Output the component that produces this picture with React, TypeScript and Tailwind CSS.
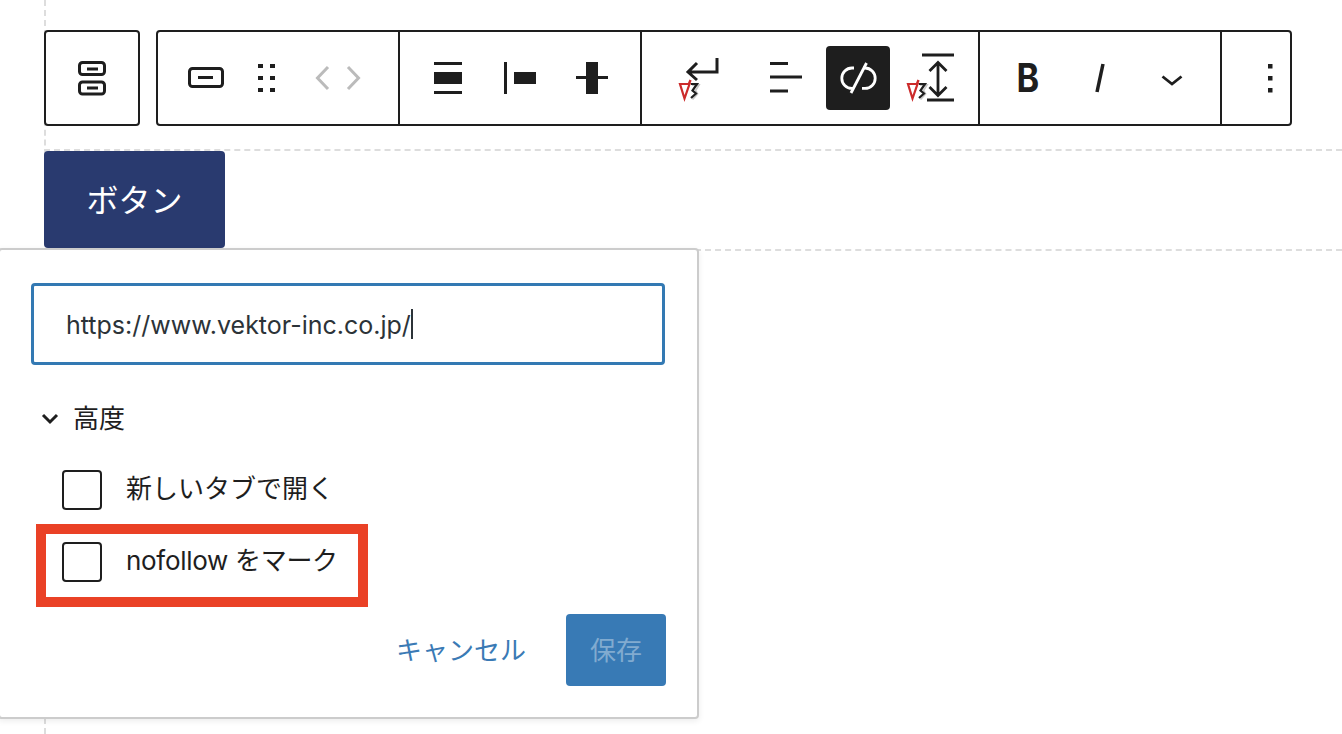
import type { ReactNode } from "react";

type BtnProps = {
  x: number;
  w: number;
  children: ReactNode;
};

// svg viewBox uses page coordinates, so icon paths can be read straight off the screenshot
const Btn = ({ x, w, children }: BtnProps) => (
  <div className="relative h-[92px] shrink-0" style={{ width: w }}>
    <svg width={w} height={92} viewBox={`${x} 32 ${w} 92`} className="block" fill="none">
      {children}
    </svg>
  </div>
);

const VkLogo = ({ dx }: { dx: number }) => (
  <g transform={`translate(${dx} 0)`}>
    <path d="M692 85H699L695.500 90.500L697.500 94L692.500 99.500" stroke="#c8c8c8" strokeWidth="1.800" />
    <path d="M691 84H697L692.500 90.500L696 93.500L691 98" stroke="#1e1e1e" strokeWidth="2.200" />
    <path d="M680 84H689.500L684.500 98.500Z" stroke="#cc2b2b" strokeWidth="2.200" />
    <path d="M688.500 85L690.500 80" stroke="#cc2b2b" strokeWidth="2.400" />
  </g>
);

const Checkbox = ({ label, textClass }: { label: string; textClass?: string }) => (
  <div className="flex items-center h-[40px]">
    <div className="w-[40px] h-[40px] rounded border-2 border-[#1e1e1e] shrink-0" />
    <span className={`ml-[24px] text-[26px] leading-[36px] -mt-[2px] text-[#1e1e1e] ${textClass ?? ""}`}>{label}</span>
  </div>
);

const Divider = () => <div className="w-[2px] self-stretch bg-[#1e1e1e] shrink-0" />;

const Toolbar = () => (
  <div className="flex gap-[16px] ml-[44px] mt-[30px] relative">
    <div className="w-[96px] h-[96px] rounded border-2 border-[#1e1e1e] flex">
      <Btn x={46} w={92}>
        <rect x="79.500" y="62.500" width="25" height="12" rx="3" stroke="#1e1e1e" strokeWidth="3" />
        <rect x="79.500" y="82" width="25" height="12" rx="3" stroke="#1e1e1e" strokeWidth="3" />
        <path d="M87 69H98M87 88H98" stroke="#1e1e1e" strokeWidth="3" />
      </Btn>
    </div>
    <div className="w-[1136px] h-[96px] rounded border-2 border-[#1e1e1e] flex">
      <div className="flex w-[240px] pl-[12px]">
        <Btn x={170} w={72}>
          <rect x="189.500" y="68.500" width="33" height="18" rx="3" stroke="#1e1e1e" strokeWidth="3" />
          <path d="M198 77.500H213" stroke="#1e1e1e" strokeWidth="3" />
        </Btn>
        <Btn x={242} w={48}>
          <path d="M258 64h5v4h-5zM270 64h5v4h-5zM258 76h5v4h-5zM270 76h5v4h-5zM258 88h5v4h-5zM270 88h5v4h-5z" fill="#1e1e1e" />
        </Btn>
        <Btn x={290} w={96}>
          <path d="M328 67L317.500 78L328 89M348 67L358.500 78L348 89" stroke="#bbb" strokeWidth="3" />
        </Btn>
      </div>
      <Divider />
      <div className="flex w-[240px] pl-[12px]">
        <Btn x={412} w={72}>
          <path d="M434 62h28v3h-28zM434 72h28v12h-28zM434 91h28v3h-28z" fill="#1e1e1e" />
        </Btn>
        <Btn x={484} w={72}>
          <path d="M504 62h3v32h-3zM514 72h22v12h-22z" fill="#1e1e1e" />
        </Btn>
        <Btn x={556} w={72}>
          <path d="M586 62h12v32h-12zM576 76h32v3h-32z" fill="#1e1e1e" />
        </Btn>
      </div>
      <Divider />
      <div className="flex w-[336px]">
        <Btn x={642} w={108}>
          <path d="M717 58V72H689M697 63L688 72L697 80" stroke="#1e1e1e" strokeWidth="3" />
          <VkLogo dx={0} />
        </Btn>
        <Btn x={750} w={72}>
          <path d="M770 63.500H788M770 77H802M770 91H788" stroke="#1e1e1e" strokeWidth="3" />
        </Btn>
        <div className="w-[72px] h-[92px] flex items-center justify-center shrink-0">
          <div className="w-[64px] h-[64px] rounded bg-[#1e1e1e]">
            <svg width={64} height={64} viewBox="826 46 64 64" fill="none" className="block">
              <path d="M854 68H852A10.200 10.200 0 0 0 852 88.400H853" stroke="#fff" strokeWidth="2.800" />
              <path d="M863 68H865A10.200 10.200 0 0 1 865 88.400H862" stroke="#fff" strokeWidth="2.800" />
              <path d="M866.500 63L851 93" stroke="#fff" strokeWidth="2.800" />
            </svg>
          </div>
        </div>
        <Btn x={894} w={72}>
          <path d="M922 55H954M927 100H954" stroke="#1e1e1e" strokeWidth="3" />
          <path d="M938 63V95M929.500 71L938 62.500L946.500 71M929.500 87L938 95.500L946.500 87" stroke="#1e1e1e" strokeWidth="2.800" />
          <VkLogo dx={228} />
        </Btn>
      </div>
      <Divider />
      <div className="flex w-[240px] pl-[12px]">
        <div className="w-[72px] h-[92px] flex items-center justify-center">
          <span className="font-['Inter',sans-serif] font-bold text-[39px] leading-none text-[#1e1e1e] scale-x-[0.88] -mt-[1px]">B</span>
        </div>
        <Btn x={1064} w={72}>
          <path d="M1103 64L1097 92" stroke="#1e1e1e" strokeWidth="3.500" />
        </Btn>
        <Btn x={1136} w={72}>
          <path d="M1162.500 76.500L1172 84L1181.500 76.500" stroke="#1e1e1e" strokeWidth="2.800" />
        </Btn>
      </div>
      <Divider />
      <Btn x={1222} w={68}>
        <path d="M1268 64h4.500v4.500h-4.500zM1268 76h4.500v4.500h-4.500zM1268 88h4.500v4.500h-4.500z" fill="#1e1e1e" />
      </Btn>
    </div>
  </div>
);

const LinkPopover = () => (
  <div className="absolute left-[-2px] top-[248px] w-[701px] h-[471px] bg-white rounded border-2 border-[#cccccc] shadow-[0_2px_6px_rgba(0,0,0,0.08)] pl-[31px] pr-[32px] pt-[33px]">
    <div className="w-[634px] h-[82px] rounded border-[3px] border-[#3379b3] flex items-center pl-[32px]">
      <span className="text-[25px] mt-[4px] text-[#2c3338] font-['Inter','Noto_Sans_CJK_JP',sans-serif]">https://www.vektor-inc.co.jp/</span>
      <span className="w-[2px] h-[30px] bg-[#2c3338]" />
    </div>
    <div className="flex items-center mt-[34px] h-[40px]">
      <svg width="18" height="12" viewBox="0 0 18 12" fill="none" className="ml-[10px] block">
        <path d="M2 2L9 9L16 2" stroke="#1e1e1e" strokeWidth="3" />
      </svg>
      <span className="ml-[14px] -mt-[2px] text-[26px] text-[#1e1e1e]">高度</span>
    </div>
    <div className="flex flex-col gap-[32px] mt-[31px] ml-[31px]">
      <Checkbox label="新しいタブで開く" />
      <Checkbox label="nofollow をマーク" textClass="tracking-[-0.3px]" />
    </div>
    <div className="flex items-center justify-end mt-[32px] -mr-[1px]">
      <span className="text-[26px] text-[#3a7ab5] mr-[40px]">キャンセル</span>
      <div className="w-[100px] h-[72px] rounded bg-[#387ab5] flex items-center justify-center text-[26px] text-[#81abd0]">
        保存
      </div>
    </div>
    {/* highlight drawn over the screenshot */}
    <div className="absolute left-[36px] top-[274px] w-[332px] h-[83px] border-[10px] border-[#ea4126]" />
  </div>
);

export default function App() {
  return (
    <div className="relative w-full h-[734px] overflow-hidden bg-white font-['Inter','Noto_Sans_CJK_JP',sans-serif]">
      <div className="absolute left-[44px] top-0 bottom-0 border-l-2 border-dashed border-[#dddddd]" />
      <div className="absolute left-[44px] right-0 top-[149px] border-t-2 border-dashed border-[#dddddd]" />
      <div className="absolute left-[44px] right-0 top-[249px] border-t-2 border-dashed border-[#dddddd]" />
      <Toolbar />
      <div className="relative ml-[44px] mt-[25px] w-[181px] h-[97px] pb-[3px] rounded bg-[#293a6f] flex items-center justify-center text-white text-[32px] font-['Noto_Sans_CJK_JP',sans-serif]">
        ボタン
      </div>
      <LinkPopover />
    </div>
  );
}
